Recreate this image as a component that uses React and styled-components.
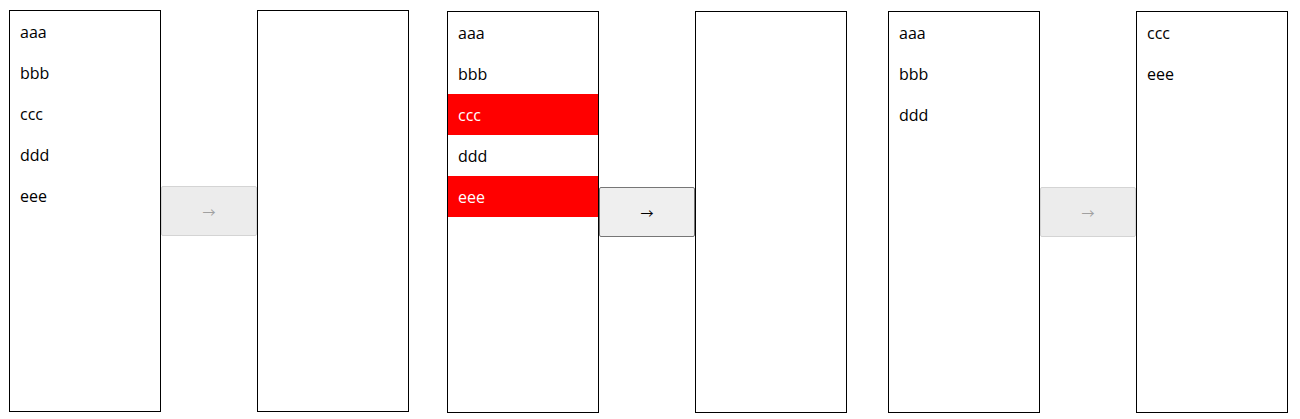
import styled, { createGlobalStyle } from "styled-components"

const Global = createGlobalStyle`
  body {
    margin: 0;
    background: #fff;
    font-family: "Open Sans", "Noto Sans", sans-serif;
  }
`

const Page = styled.div`
  display: flex;
  align-items: flex-start;
  padding-left: 9px;
`

const Transfer = styled.div`
  display: flex;
  align-items: center;
  margin-top: ${(p) => p.$top}px;
  margin-left: ${(p) => p.$left}px;
`

const ListBox = styled.ul`
  box-sizing: border-box;
  width: 152px;
  height: 402px;
  margin: 0;
  padding: 0;
  list-style: none;
  border: 1px solid #000;
  background: #fff;
`

const Item = styled.li`
  height: 41px;
  line-height: 42px;
  padding-left: 10px;
  font-size: 16px;
  color: ${(p) => (p.$selected ? "#fff" : "#000")};
  background: ${(p) => (p.$selected ? "#ff0000" : "transparent")};
`

const MoveButton = styled.button`
  box-sizing: border-box;
  width: 96px;
  height: 50px;
  padding: 0;
  border-radius: 2px;
  font-family: "Noto Sans CJK SC", sans-serif;
  font-size: 13px;
  background: ${(p) => (p.disabled ? "#ececec" : "#efefef")};
  border: 1px solid ${(p) => (p.disabled ? "#d4d4d4" : "#767676")};
  color: ${(p) => (p.disabled ? "#a0a0a0" : "#000")};
`

const demos = [
  { top: 10, left: 0, source: ["aaa", "bbb", "ccc", "ddd", "eee"], selected: [], target: [] },
  { top: 11, left: 38, source: ["aaa", "bbb", "ccc", "ddd", "eee"], selected: ["ccc", "eee"], target: [] },
  { top: 11, left: 41, source: ["aaa", "bbb", "ddd"], selected: [], target: ["ccc", "eee"] },
]

const App = () => {
  return (
    <>
      <Global />
      <Page>
        {demos.map((d, i) => (
          <Transfer key={i} $top={d.top} $left={d.left}>
            <ListBox>
              {d.source.map((s) => (
                <Item key={s} $selected={d.selected.includes(s)}>
                  {s}
                </Item>
              ))}
            </ListBox>
            <MoveButton disabled={d.selected.length === 0}>→</MoveButton>
            <ListBox>
              {d.target.map((s) => (
                <Item key={s}>{s}</Item>
              ))}
            </ListBox>
          </Transfer>
        ))}
      </Page>
    </>
  )
}

export default App
